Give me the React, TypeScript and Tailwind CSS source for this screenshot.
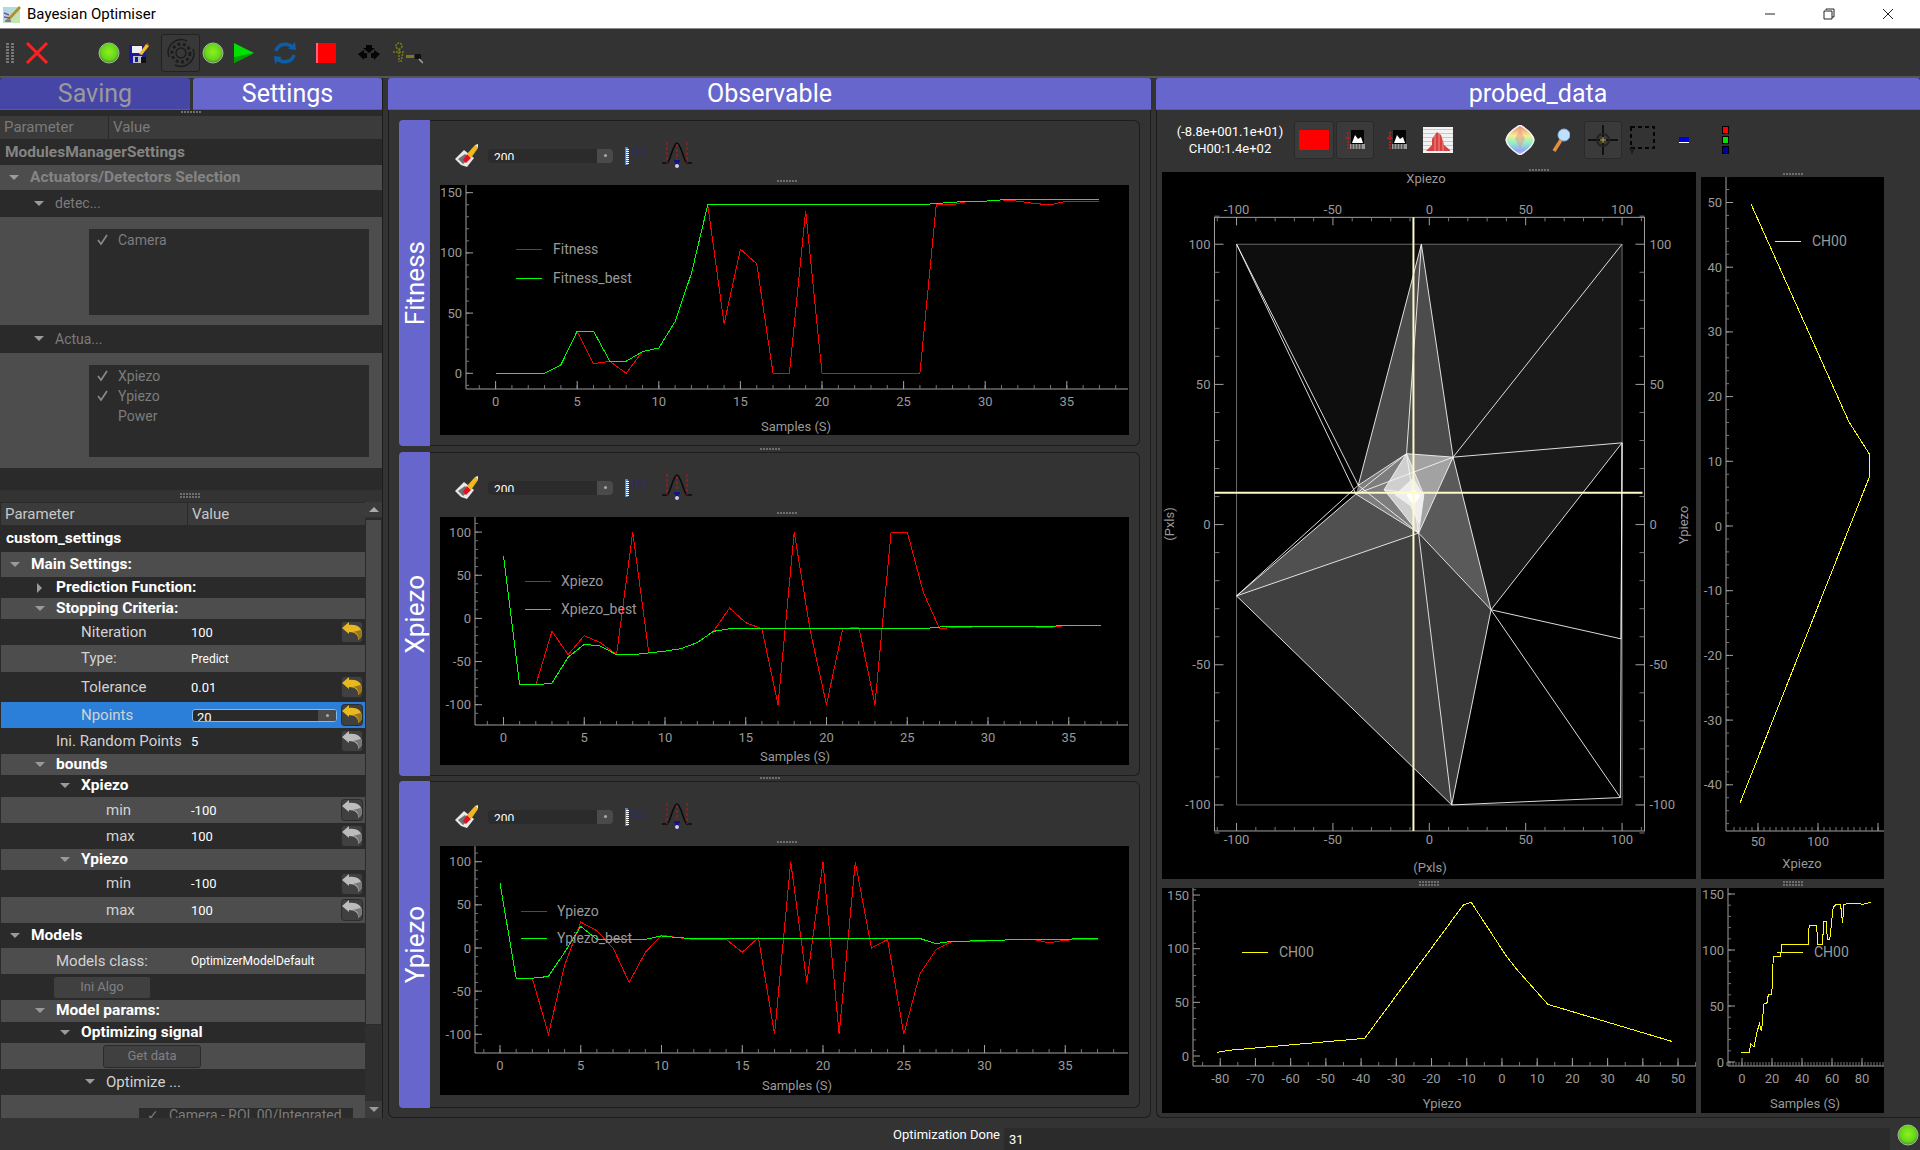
import React from 'react';

const UI_FONT = "font-['Roboto','Noto_Sans',sans-serif]";

const range = (from: number, to: number, step: number) => {
  const out: number[] = [];
  for (let v = from; v <= to + 0.001; v += step) out.push(v);
  return out;
};

// ---------- small icons ----------

function Grip({ rows = 1 }: { rows?: number }) {
  return (
    <svg width="20" height={rows * 3} className="block">
      {range(0, rows - 1, 1).map((r) =>
        range(0, 6, 1).map((c) => <rect key={`${r}-${c}`} x={c * 3} y={r * 3} width="2" height="2" fill="#6e6e6e" />)
      )}
    </svg>
  );
}

function Led({ id }: { id: string }) {
  return (
    <svg width="22" height="22" viewBox="0 0 22 22" className="block">
      <defs>
        <radialGradient id={id} cx="50%" cy="45%" r="55%">
          <stop offset="0%" stopColor="#8cf01e" />
          <stop offset="70%" stopColor="#66d61a" />
          <stop offset="100%" stopColor="#3f9412" />
        </radialGradient>
      </defs>
      <circle cx="11" cy="11" r="10" fill={`url(#${id})`} stroke="#a8b8a0" strokeWidth="1" />
    </svg>
  );
}

function AppIcon() {
  return (
    <svg width="20" height="20" viewBox="0 0 20 20" className="block">
      <defs>
        <linearGradient id="appbg" x1="0" y1="0" x2="1" y2="1">
          <stop offset="0%" stopColor="#a8d8ee" />
          <stop offset="100%" stopColor="#c8e8a0" />
        </linearGradient>
      </defs>
      <rect x="1" y="3" width="17" height="16" fill="url(#appbg)" />
      <path d="M4 16 L17 2 L19 4 L7 17 Z" fill="#b09030" />
      <path d="M2 9 L7 11 M2 13 L8 14 M3 17 L9 17" stroke="#8050a0" strokeWidth="1.5" />
    </svg>
  );
}

function UndoIcon({ color }: { color: 'yellow' | 'gray' }) {
  const main = color === 'yellow' ? '#e8b820' : '#bcbcbc';
  const dark = color === 'yellow' ? '#96761a' : '#767676';
  return (
    <svg width="22" height="22" viewBox="0 0 22 22" className="block">
      <rect x="0.5" y="0.5" width="21" height="21" rx="3" fill="#404040" stroke="#2c2c2c" />
      <path d="M1 7 L8 1 L8 4 C15 3 21 6 21 13 C21 16 19 18 17 19 C18 14 14 11 8 11 L8 13 Z" fill={main} />
      <path d="M12 11 C17 12 18 15 17 19 C19 18 21 16 21 13 C21 11 20.5 10 19.5 9 Z" fill={dark} />
    </svg>
  );
}

function DownArrow() {
  return (
    <svg width="10" height="6" className="block">
      <path d="M0 0 H10 L5 5 Z" fill="#9a9a9a" />
    </svg>
  );
}

function RightArrow() {
  return (
    <svg width="6" height="10" className="block">
      <path d="M0 0 V10 L5 5 Z" fill="#9a9a9a" />
    </svg>
  );
}

function Check() {
  return (
    <svg width="11" height="12" viewBox="0 0 11 12" className="block">
      <path d="M1 6 L4 10 L10 1" stroke="#8a8a8a" strokeWidth="1.6" fill="none" />
    </svg>
  );
}

function CloseCross() {
  return (
    <svg width="24" height="22" viewBox="0 0 24 22" className="block">
      <path d="M2 1 L22 21 M22 1 L2 21" stroke="#ff2020" strokeWidth="3" />
    </svg>
  );
}

function SaveIcon() {
  return (
    <svg width="20" height="20" viewBox="0 0 20 20" className="block">
      <rect x="0" y="2" width="17" height="18" fill="#1a1a9a" />
      <rect x="3" y="3" width="10" height="7" fill="#f0f0f0" />
      <rect x="4" y="13" width="9" height="7" fill="#c0c0c8" />
      <rect x="6" y="14" width="3" height="5" fill="#1a1a9a" />
      <path d="M10 11 L17 1 L20 3 L13 12 Z" fill="#f0c020" />
      <path d="M17 1 L20 3 L19 0 Z" fill="#e04030" />
      <path d="M12 14 H17 V20 H12 Z" fill="#111" />
    </svg>
  );
}

function GearIcon() {
  return (
    <svg width="32" height="32" viewBox="0 0 32 32" className="block" fill="none" stroke="#1c1c1c">
      <circle cx="16" cy="16" r="5" strokeWidth="1.5" />
      <circle cx="16" cy="16" r="9" strokeWidth="3" strokeDasharray="3 2.5" />
      <path d="M4 20 A13 13 0 0 1 22 4 M28 12 A13 13 0 0 1 10 28" strokeWidth="1.5" />
    </svg>
  );
}

function PlayIcon() {
  return (
    <svg width="20" height="20" viewBox="0 0 20 20" className="block">
      <path d="M0 0 L20 10 L0 20 Z" fill="#00e000" />
      <path d="M0 14 L20 10 L0 20 Z" fill="#00a000" />
    </svg>
  );
}

function RefreshIcon() {
  return (
    <svg width="22" height="24" viewBox="0 0 22 24" className="block" fill="none" stroke="#0c5ea8" strokeWidth="3.5">
      <path d="M2 10 C4 3 13 1 18 6" />
      <path d="M20 14 C18 21 9 23 4 18" />
      <path d="M14 8 L22 9 L21 1 Z" fill="#0c5ea8" stroke="none" />
      <path d="M8 16 L0 15 L1 23 Z" fill="#0c5ea8" stroke="none" />
    </svg>
  );
}

function ArrowsIcon() {
  return (
    <svg width="22" height="16" viewBox="0 0 22 16" className="block" fill="#050505">
      <path d="M8 0 H14 V3 H17 L11 8 L5 3 H8 Z" />
      <path d="M0 9 L6 5 V8 H9 V13 H6 V15 Z" />
      <path d="M22 9 L16 5 V8 H13 V13 H16 V15 Z" />
    </svg>
  );
}

function RoiIcon() {
  return (
    <svg width="32" height="22" viewBox="0 0 32 22" className="block" fill="none">
      <circle cx="8" cy="4" r="3" stroke="#7a7a18" strokeWidth="1.5" strokeDasharray="2 1" />
      <path d="M2 10 H12 L10 20 M8 7 V20" stroke="#7a7a18" strokeWidth="1.5" strokeDasharray="2 1" />
      <rect x="15" y="13" width="8" height="3" fill="#7a7a18" />
      <rect x="24" y="12" width="6" height="5" fill="#111" />
      <path d="M28 17 L32 21" stroke="#aaa" strokeWidth="1.5" />
    </svg>
  );
}

function EraserIcon() {
  return (
    <svg width="24" height="24" viewBox="0 0 24 24" className="block">
      <path d="M1 15 L10 6 L20 14 L13 23 L7 21 Z" fill="#e8e8e8" />
      <path d="M4 15 L11 10 L15 15 L9 20 Z" fill="#707070" />
      <path d="M9 16 L13 10 L17 14 L12 19 Z" fill="#e01020" />
      <path d="M13 10 L21 1 L24 4 L17 14 Z" fill="#f0b820" />
      <path d="M21 1 L24 4 L24 0 Z" fill="#f8f0c0" />
    </svg>
  );
}

function RulerIcon() {
  return (
    <svg width="20" height="18" viewBox="0 0 20 18" className="block">
      <rect x="0" y="0" width="3" height="18" fill="#4a80d0" />
      {range(2, 16, 2).map((y) => (
        <rect key={y} x="1" y={y} width="3" height="1" fill="#ffffff" />
      ))}
      <text x="5" y="9" fontSize="10" fill="#2c2c70">123</text>
    </svg>
  );
}

function GaussIcon() {
  return (
    <svg width="30" height="27" viewBox="0 0 30 27" className="block" fill="none">
      <path d="M0 21 H5 C8 21 11 1 15 1 C19 1 22 21 25 21 H30" stroke="#0a0a0a" strokeWidth="1.6" />
      <path d="M5 0 V21 M25 0 V21 M15 2 V18" stroke="#c01818" strokeWidth="1" strokeDasharray="3 2" />
      <rect x="12" y="18" width="6" height="2" fill="#101088" />
      <path d="M15 20 V26" stroke="#101088" strokeWidth="3" />
      <circle cx="15" cy="24" r="2" fill="#d0d0e8" />
    </svg>
  );
}

function SmallPlotIcon({ large }: { large?: boolean }) {
  return (
    <svg width="22" height="22" viewBox="0 0 22 22" className="block">
      <rect x="7" y="1" width="13" height="14" fill="#050505" />
      <path d="M8 14 L11 6 L14 10 L17 8 L19 14 Z" fill="#ffffff" />
      <path d="M4 3 V20 M1 9 H7" stroke="#e01818" strokeWidth={large ? 1.5 : 1} strokeDasharray="2 1" />
      <rect x="6" y="15" width="15" height="5" fill="#9a9a9a" />
      <path d="M8 15 V21 M11 15 V21 M14 15 V21 M17 15 V21" stroke="#333" />
    </svg>
  );
}

function HistIcon() {
  return (
    <svg width="30" height="26" viewBox="0 0 30 26" className="block">
      <rect width="30" height="26" fill="#f2f2f2" />
      {range(2, 24, 4).map((y) => (
        <rect key={y} x="0" y={y} width="30" height="1" fill="#c8c8c8" />
      ))}
      <path d="M3 24 L9 18 V12 L14 5 L18 8 L21 18 L27 23 V24 Z" fill="#d84040" />
      <path d="M12 8 V24 M16 6 V24 M20 14 V24" stroke="#f09090" />
    </svg>
  );
}

function ColorIcon() {
  return (
    <svg width="30" height="30" viewBox="0 0 30 30" className="block">
      <defs>
        <linearGradient id="rainbow" x1="0" y1="0" x2="0" y2="1">
          <stop offset="0%" stopColor="#f07878" />
          <stop offset="35%" stopColor="#f4ee90" />
          <stop offset="60%" stopColor="#90f0c8" />
          <stop offset="85%" stopColor="#90a8f8" />
          <stop offset="100%" stopColor="#e0a0e8" />
        </linearGradient>
      </defs>
      <path d="M15 0 C20 3 28 8 29 15 C28 22 20 27 15 30 C10 27 2 22 1 15 C2 8 10 3 15 0 Z" fill="url(#rainbow)" stroke="#f4f4f4" strokeWidth="1.5" />
      <path d="M15 4 L20 14 L15 24 L10 14 Z" fill="#f08890" opacity="0.45" />
    </svg>
  );
}

function MagnifierIcon() {
  return (
    <svg width="18" height="26" viewBox="0 0 18 26" className="block">
      <circle cx="12" cy="8" r="6" fill="#bfe0ff" stroke="#88b0e0" />
      <path d="M9 13 L2 24" stroke="#e09040" strokeWidth="3.5" />
    </svg>
  );
}

function CrosshairIcon() {
  return (
    <svg width="30" height="30" viewBox="0 0 30 30" className="block" fill="none">
      <path d="M15 0 V30 M0 15 H30" stroke="#050505" strokeWidth="1.5" />
      <circle cx="15" cy="15" r="6" stroke="#222" strokeWidth="2" />
      <path d="M15 12 V18 M12 15 H18" stroke="#d8c040" />
    </svg>
  );
}

function DashedRect() {
  return (
    <svg width="28" height="28" viewBox="0 0 28 28" className="block" fill="none">
      <rect x="2" y="1" width="23" height="21" stroke="#050505" strokeWidth="2" strokeDasharray="4 3" />
      <circle cx="3" cy="23" r="2" stroke="#111" />
      <path d="M3 25 V28" stroke="#111" />
    </svg>
  );
}

function RgbStack() {
  return (
    <div className="flex flex-col gap-[2px]">
      <div className="h-[8px] w-[7px] border border-black bg-[#ff0000]" />
      <div className="h-[8px] w-[7px] border border-black bg-[#00e000]" />
      <div className="h-[8px] w-[7px] border border-black bg-[#0000a0]" />
    </div>
  );
}

// ---------- plots ----------

const TEXT_C = '#999999';
const AXIS_C = '#a0a0a0';

type Tick = [number, string];

type AxesProps = {
  axisX: number;
  axisY: number;
  right: number;
  top?: number;
  xMajor: Tick[];
  xMinor: number[];
  yMajor: Tick[];
  yMinor: number[];
  labelDx?: number;
  labelDy?: number;
  title: { text: string; x: number; y: number };
};

function Axes({ axisX, axisY, right, top = 0, xMajor, xMinor, yMajor, yMinor, labelDx = 4, labelDy = 17, title }: AxesProps) {
  return (
    <g fontSize="13" fill={TEXT_C}>
      <path d={`M${axisX} ${top} V${axisY} H${right}`} stroke={AXIS_C} fill="none" />
      {xMinor.map((x) => (
        <path key={`xm${x}`} d={`M${x} ${axisY} v-4`} stroke="#777" />
      ))}
      {yMinor.map((y) => (
        <path key={`ym${y}`} d={`M${axisX} ${y} h3`} stroke="#777" />
      ))}
      {xMajor.map(([x, t]) => (
        <g key={`x${t}`}>
          <path d={`M${x} ${axisY} v-8`} stroke={AXIS_C} />
          <text x={x} y={axisY + labelDy} textAnchor="middle">{t}</text>
        </g>
      ))}
      {yMajor.map(([y, t]) => (
        <g key={`y${t}`}>
          <path d={`M${axisX} ${y} h7`} stroke={AXIS_C} />
          <text x={axisX - labelDx} y={y + 4.5} textAnchor="end">{t}</text>
        </g>
      ))}
      <text x={title.x} y={title.y + 4} textAnchor="middle">{title.text}</text>
    </g>
  );
}

function Legend({ x, y, color, text, textX }: { x: number; y: number; color: string; text: string; textX: number }) {
  return (
    <g>
      <path d={`M${x} ${y} h26`} stroke={color} shapeRendering="crispEdges" />
      <text x={textX} y={y + 5} fontSize="14" fill={TEXT_C}>{text}</text>
    </g>
  );
}

type TrendProps = {
  h: number;
  axisX: number;
  axisY: number;
  x0: number;
  dx: number;
  y0: number;
  dy: number;
  yTicks: number[];
  yMinorFrom: number;
  yMinorTo: number;
  title: { text: string; x: number; y: number };
  red: number[];
  green: number[];
  legend: { lineX: number; textX: number; y1: number; y2: number; a: string; b: string };
};

function TrendPlot({ h, axisX, axisY, x0, dx, y0, dy, yTicks, yMinorFrom, yMinorTo, title, red, green, legend }: TrendProps) {
  const pts = (d: number[]) => d.map((v, i) => `${x0 + i * dx},${y0 - v * dy}`).join(' ');
  return (
    <div className="mx-[10px] bg-black" style={{ height: h }}>
      <svg width="688" height={h} className="block">
        <Axes
          axisX={axisX}
          axisY={axisY}
          right={688}
          xMajor={range(0, 35, 5).map((v) => [x0 + v * dx, String(v)] as Tick)}
          xMinor={range(-1, 38, 1).map((v) => x0 + v * dx)}
          yMajor={yTicks.map((v) => [y0 - v * dy, String(v)] as Tick)}
          yMinor={range(yMinorFrom, yMinorTo, 10).map((v) => y0 - v * dy)}
          title={title}
        />
        <polyline points={pts(red)} fill="none" stroke="#ff0000" shapeRendering="crispEdges" />
        <polyline points={pts(green)} fill="none" stroke="#00ff00" shapeRendering="crispEdges" />
        <Legend x={legend.lineX} y={legend.y1} color="#ff0000" text={legend.a} textX={legend.textX} />
        <Legend x={legend.lineX} y={legend.y2} color="#00ff00" text={legend.b} textX={legend.textX} />
      </svg>
    </div>
  );
}

const fitnessRed = [0, 0, 0, 0, 7, 35, 8, 10, 0, 18, 21, 43, 83, 140, 41, 103, 91, 0, 0, 135, 0, 0, 0, 0, 0, 0, 0, 140, 140, 143, 143, 144, 143, 141, 140, 143, 143, 143];
const fitnessGreen = [0, 0, 0, 0, 7, 35, 35, 10, 10, 18, 21, 43, 83, 140, 140, 140, 140, 140, 140, 140, 140, 140, 140, 140, 140, 140, 140, 141, 142, 143, 143, 144, 144, 144, 144, 144, 144, 144];
const xRed = [72, -77, -77, -15, -42, -20, -28, -42, 100, -40, -38, -35, -28, -15, 12, -5, -12, -100, 100, -15, -100, -12, -10, -100, 100, 100, 30, -12, -10, -10, -9, -9, -9, -10, -10, -8, -8, -8];
const xGreen = [72, -77, -77, -75, -45, -30, -32, -42, -42, -40, -38, -35, -28, -15, -12, -12, -12, -12, -12, -12, -12, -12, -12, -12, -12, -12, -12, -10, -9, -9, -9, -9, -9, -9, -9, -8, -8, -8];
const yRed = [75, -35, -35, -100, -20, 30, 20, 0, -40, -5, 15, 12, 10, 10, 10, -5, 12, -100, 100, -40, 100, -100, 100, 0, 10, -100, -30, -2, 8, 8, 8, 9, 10, 10, 6, 9, 10, 10];
const yGreen = [75, -35, -35, -33, -5, 25, 10, 10, 10, 10, 14, 12, 11, 11, 11, 11, 11, 11, 11, 11, 11, 11, 11, 11, 11, 11, 11, 5, 8, 8, 9, 9, 10, 10, 10, 10, 11, 11];

function ObsPanel({ name, contentH, children }: { name: string; contentH: string; children: React.ReactNode }) {
  return (
    <div className={`flex ${contentH}`}>
      <div className="flex w-[31px] items-center justify-center rounded-l-[4px] bg-[#6666cc]">
        <span className="rotate-180 text-[26px] leading-none text-white [writing-mode:vertical-rl]">{name}</span>
      </div>
      <div className="flex flex-1 flex-col rounded-r-[6px] border-y border-r border-[#1c1c1c]">
        <div className="relative flex h-[64px] items-center pl-[24px] pt-[5px]">
          <EraserIcon />
          <div className="ml-[10px] flex h-[14px] w-[125px] items-start overflow-hidden rounded-[4px] bg-[#2b2b2b]">
            <div className="ml-[6px] mt-[3px] h-[8px] flex-1 overflow-hidden text-[12px] leading-[12px] text-white">200</div>
            <div className="flex h-full w-[16px] items-center justify-center bg-[#4a4a4a]">
              <div className="h-[3px] w-[3px] rounded-full bg-[#aaa]" />
            </div>
          </div>
          <div className="ml-[12px]"><RulerIcon /></div>
          <div className="ml-[17px]"><GaussIcon /></div>
          <div className="absolute bottom-[2px] left-[347px]"><Grip /></div>
        </div>
        {children}
      </div>
    </div>
  );
}

function MainImagePlot() {
  const m = (vx: number, vy: number): [number, number] => [vx / 2.9 - 2, vy / 2.306 + 28];
  const pg = (p: number[][]) => p.map(([a, b]) => m(a, b).join(',')).join(' ');
  const TL = [222, 102], TR = [1340, 102], C = [758, 102], L = [222, 913], Mb = [846, 1395], N = [960, 945], P = [850, 593];
  const Q = [575, 658], Q2 = [568, 678], R = [715, 585], S = [750, 768], T = [1340, 560], U = [1335, 1378], V = [1337, 1012];
  const fills: [number[][], string][] = [
    [[TL, C, Q], '#0e0e0e'],
    [[C, TR, T, N, P], '#1a1a1a'],
    [[C, P, N, S, R, Q], '#4c4c4c'],
    [[P, N, S, [800, 680]], '#5a5a5a'],
    [[L, Q2, S, Mb], '#404040'],
    [[L, Q2, S], '#505050'],
    [[S, N, Mb], '#3a3a3a'],
    [[Q, R, P, [800, 680], S, Q2], '#7d7d7d'],
    [[R, P, [800, 680], S], '#a2a2a2'],
    [[[650, 668], R, [765, 680], S], '#cfcfcf'],
    [[[680, 680], [735, 640], [765, 682], [752, 750], [725, 705]], '#eeeeee'],
    [[[715, 680], [735, 665], [755, 682], [735, 705]], '#ffffff'],
  ];
  const edges: number[][][] = [
    [TL, Q], [TL, Q2], [C, Q], [C, P], [C, R], [TR, P], [P, T], [T, N], [T, U], [N, P], [N, S], [N, V], [N, U], [N, Mb],
    [L, Q], [L, Q2], [L, S], [L, Mb], [S, Mb], [U, Mb], [Q, R], [Q2, R], [R, P], [P, S], [P, Q2], [R, S], [Q2, S], [Q, S], [V, T],
    [[650, 668], R], [[650, 668], S], [[650, 668], [765, 680]], [R, [765, 680]], [[765, 680], S],
  ];
  const xs = range(-110, 110, 10).map((u) => m(222 + (u + 100) * 5.59, 0)[0]);
  const ys = range(-110, 110, 10).map((u) => m(0, 102 + (100 - u) * 6.465)[1]);
  const [fx0, fy0] = m(158, 40);
  const [fx1, fy1] = m(1405, 1455);
  const labels = [-100, -50, 0, 50, 100];
  const lx = (u: number) => m(222 + (u + 100) * 5.59, 0)[0];
  const ly = (u: number) => m(0, 102 + (100 - u) * 6.465)[1];
  return (
    <svg width="534" height="707" className="block bg-black">
      {fills.map(([p, c], i) => <polygon key={i} points={pg(p)} fill={c} />)}
      <polygon points={pg([TL, TR, [1340, 1395], [222, 1395]])} fill="none" stroke="#6a6a6a" />
      {edges.map(([a, b], i) => (
        <line key={i} x1={m(a[0], a[1])[0]} y1={m(a[0], a[1])[1]} x2={m(b[0], b[1])[0]} y2={m(b[0], b[1])[1]} stroke="#f4f4f4" strokeWidth="0.9" />
      ))}
      <rect x={fx0} y={fy0} width={fx1 - fx0} height={fy1 - fy0} fill="none" stroke={AXIS_C} />
      {xs.map((x, i) => (
        <g key={i} stroke={i % 5 === 1 ? AXIS_C : '#777'}>
          <line x1={x} x2={x} y1={fy0} y2={fy0 + (i % 5 === 1 ? 8 : 4)} />
          <line x1={x} x2={x} y1={fy1} y2={fy1 - (i % 5 === 1 ? 8 : 4)} />
        </g>
      ))}
      {ys.map((y, i) => (
        <g key={i} stroke={i % 5 === 1 ? AXIS_C : '#777'}>
          <line y1={y} y2={y} x1={fx0} x2={fx0 + (i % 5 === 1 ? 9 : 5)} />
          <line y1={y} y2={y} x1={fx1} x2={fx1 - (i % 5 === 1 ? 9 : 5)} />
        </g>
      ))}
      <g fontSize="13" fill={TEXT_C}>
        {labels.map((u) => (
          <g key={u}>
            <text x={lx(u)} y={fy0 - 3} textAnchor="middle">{u}</text>
            <text x={lx(u)} y={fy1 + 13} textAnchor="middle">{u}</text>
            <text x={fx0 - 4} y={ly(u) + 4.5} textAnchor="end">{u}</text>
            <text x={fx1 + 5} y={ly(u) + 4.5}>{u}</text>
          </g>
        ))}
        <text x="264" y="11" textAnchor="middle">Xpiezo</text>
        <text x="268" y="700" textAnchor="middle">(Pxls)</text>
        <text x="12" y="352" textAnchor="middle" transform="rotate(-90 12 352)">(Pxls)</text>
        <text x="526" y="353" textAnchor="middle" transform="rotate(-90 526 353)">Ypiezo</text>
      </g>
      <line x1={fx0} x2={fx1 - 2} y1={m(0, 675)[1]} y2={m(0, 675)[1]} stroke="#fffbc8" strokeWidth="2" />
      <line x1={m(735, 0)[0]} x2={m(735, 0)[0]} y1={fy0} y2={fy1} stroke="#fffbc8" strokeWidth="2" />
    </svg>
  );
}

function SidePlot() {
  const y0 = 349;
  const dy = 6.47;
  const px = (x: number, y: number) => `${x - 1701},${y - 177}`;
  const line = [[1751, 204], [1849, 422], [1870, 455], [1869, 478], [1740, 803]];
  return (
    <svg width="183" height="702" className="block bg-black">
      <Axes
        axisX={25}
        axisY={654}
        right={183}
        xMajor={[[57, '50'], [117, '100'], [177, '']]}
        xMinor={range(33, 180, 6)}
        yMajor={range(-40, 50, 10).map((v) => [y0 - v * dy, String(v)] as Tick)}
        yMinor={range(-46, 54, 2).map((v) => y0 - v * dy)}
        title={{ text: 'Xpiezo', x: 101, y: 687 }}
        labelDy={15}
      />
      <polyline points={line.map(([a, b]) => px(a, b)).join(' ')} fill="none" stroke="#ffff00" shapeRendering="crispEdges" />
      <Legend x={74} y={64} color="#ffff00" text="CH00" textX={111} />
    </svg>
  );
}

function BottomLeftPlot() {
  const c = (vx: number, vy: number) => `${vx / 2.036 - 12},${vy / 3 - 18}`;
  const line = [[137, 547], [160, 541], [437, 505], [638, 105], [654, 97], [725, 257], [745, 295], [810, 403], [1062, 514]];
  const tx = (u: number) => (143 + ((u + 80) / 10) * 71.7) / 2.036 - 12;
  const ty = (u: number) => 168 - u * 1.073;
  return (
    <svg width="534" height="225" className="block bg-black">
      <Axes
        axisX={31}
        axisY={178}
        right={534}
        top={0}
        xMajor={range(-80, 50, 10).map((u) => [tx(u), String(u)] as Tick)}
        xMinor={range(-85, 55, 5).map(tx)}
        yMajor={[0, 50, 100, 150].map((u) => [ty(u), String(u)] as Tick)}
        yMinor={range(-5, 155, 10).map(ty)}
        title={{ text: 'Ypiezo', x: 280, y: 216 }}
        labelDy={17}
      />
      <polyline points={line.map(([a, b]) => c(a, b)).join(' ')} fill="none" stroke="#ffff00" shapeRendering="crispEdges" />
      <Legend x={80} y={64} color="#ffff00" text="CH00" textX={117} />
    </svg>
  );
}

function BottomRightPlot() {
  const c = (vx: number, vy: number) => `${vx / 2.036 + 1150 - 1701},${vy / 3 - 18}`;
  const line = [[1203, 547], [1220, 547], [1223, 522], [1230, 530], [1236, 484], [1241, 462], [1245, 484], [1250, 402], [1256, 400], [1259, 373], [1266, 373], [1269, 260], [1284, 260], [1286, 223], [1340, 223], [1342, 166], [1357, 166], [1360, 223], [1369, 223], [1372, 153], [1377, 153], [1379, 208], [1384, 208], [1391, 112], [1397, 103], [1406, 103], [1410, 158], [1413, 103], [1424, 100], [1440, 100], [1452, 103], [1467, 97]];
  const tx = (u: number) => 41 + (u * 30) / 20;
  const ty = (u: number) => 174 - u * 1.12;
  return (
    <svg width="183" height="225" className="block bg-black">
      <Axes
        axisX={27}
        axisY={178}
        right={183}
        xMajor={range(0, 80, 20).map((u) => [tx(u), String(u)] as Tick)}
        xMinor={range(-10, 94, 2).map(tx)}
        yMajor={[0, 50, 100, 150].map((u) => [ty(u), String(u)] as Tick)}
        yMinor={range(0, 155, 10).map(ty)}
        title={{ text: 'Samples (S)', x: 104, y: 216 }}
      />
      <polyline points={line.map(([a, b]) => c(a, b)).join(' ')} fill="none" stroke="#ffff00" shapeRendering="crispEdges" />
      <Legend x={76} y={64} color="#ffff00" text="CH00" textX={113} />
    </svg>
  );
}

// ---------- settings tree ----------

type Row = {
  h: string;
  x: string;
  label: string;
  arrow?: 'down' | 'right';
  arrowX?: string;
  bold?: boolean;
  value?: string;
  small?: boolean;
  reset?: 'yellow' | 'gray';
  selected?: boolean;
  button?: string;
};

const rows: Row[] = [
  { h: 'h-[26px]', x: 'pl-[5px]', label: 'custom_settings', bold: true },
  { h: 'h-[25px]', x: 'pl-[30px]', label: 'Main Settings:', bold: true, arrow: 'down', arrowX: 'left-[9px]' },
  { h: 'h-[21px]', x: 'pl-[55px]', label: 'Prediction Function:', bold: true, arrow: 'right', arrowX: 'left-[36px]' },
  { h: 'h-[21px]', x: 'pl-[55px]', label: 'Stopping Criteria:', bold: true, arrow: 'down', arrowX: 'left-[34px]' },
  { h: 'h-[26px]', x: 'pl-[80px]', label: 'Niteration', value: '100', reset: 'yellow' },
  { h: 'h-[27px]', x: 'pl-[80px]', label: 'Type:', value: 'Predict', small: true },
  { h: 'h-[30px]', x: 'pl-[80px]', label: 'Tolerance', value: '0.01', reset: 'yellow' },
  { h: 'h-[26px]', x: 'pl-[80px]', label: 'Npoints', reset: 'yellow', selected: true },
  { h: 'h-[26px]', x: 'pl-[55px]', label: 'Ini. Random Points', value: '5', reset: 'gray' },
  { h: 'h-[21px]', x: 'pl-[55px]', label: 'bounds', bold: true, arrow: 'down', arrowX: 'left-[34px]' },
  { h: 'h-[22px]', x: 'pl-[80px]', label: 'Xpiezo', bold: true, arrow: 'down', arrowX: 'left-[59px]' },
  { h: 'h-[26px]', x: 'pl-[105px]', label: 'min', value: '-100', reset: 'gray' },
  { h: 'h-[26px]', x: 'pl-[105px]', label: 'max', value: '100', reset: 'gray' },
  { h: 'h-[21px]', x: 'pl-[80px]', label: 'Ypiezo', bold: true, arrow: 'down', arrowX: 'left-[59px]' },
  { h: 'h-[27px]', x: 'pl-[105px]', label: 'min', value: '-100', reset: 'gray' },
  { h: 'h-[26px]', x: 'pl-[105px]', label: 'max', value: '100', reset: 'gray' },
  { h: 'h-[25px]', x: 'pl-[30px]', label: 'Models', bold: true, arrow: 'down', arrowX: 'left-[9px]' },
  { h: 'h-[26px]', x: 'pl-[55px]', label: 'Models class:', value: 'OptimizerModelDefault', small: true },
  { h: 'h-[26px]', x: 'pl-[52px]', label: '', button: 'Ini Algo' },
  { h: 'h-[22px]', x: 'pl-[55px]', label: 'Model params:', bold: true, arrow: 'down', arrowX: 'left-[34px]' },
  { h: 'h-[21px]', x: 'pl-[80px]', label: 'Optimizing signal', bold: true, arrow: 'down', arrowX: 'left-[59px]' },
  { h: 'h-[26px]', x: 'pl-[102px]', label: '', button: 'Get data' },
  { h: 'h-[26px]', x: 'pl-[105px]', label: 'Optimize ...', arrow: 'down', arrowX: 'left-[84px]' },
];

function TreeRow({ row, index }: { row: Row; index: number }) {
  const bg = row.selected ? 'bg-[#2b7fd9]' : index % 2 === 1 ? 'bg-[#4d4d4d]' : 'bg-[#2a2a2a]';
  return (
    <div className={`relative flex items-center ${row.h} ${bg}`}>
      {row.arrow && (
        <div className={`absolute top-1/2 -translate-y-1/2 ${row.arrowX}`}>
          {row.arrow === 'down' ? <DownArrow /> : <RightArrow />}
        </div>
      )}
      <div className={`w-[188px] shrink-0 whitespace-nowrap ${row.x} ${row.bold ? 'text-[15.5px] font-bold text-white' : 'text-[15px] text-[#d2d2d2]'}`}>
        {row.button ? (
          <div className="flex h-[23px] w-[98px] items-center justify-center rounded-[3px] border border-[#2a2a2a] bg-[#404040] text-[13px] font-normal text-[#808080]">
            {row.button}
          </div>
        ) : (
          row.label
        )}
      </div>
      {row.value && <div className={`ml-[2px] leading-none text-white ${row.small ? 'text-[12px]' : 'text-[13px]'}`}>{row.value}</div>}
      {row.selected && (
        <div className="ml-[3px] flex h-[13px] w-[145px] overflow-hidden rounded-[3px] border border-[#86b6ee] bg-[#2a2a2a]">
          <div className="ml-[4px] mt-[2px] h-[9px] flex-1 overflow-hidden text-[13px] leading-[12px] text-white">20</div>
          <div className="flex w-[18px] items-center justify-center bg-[#4a4a4a]">
            <div className="h-[3px] w-[3px] rounded-full bg-[#aaa]" />
          </div>
        </div>
      )}
      {row.reset && (
        <div className="absolute right-[2px] top-1/2 -translate-y-1/2">
          <UndoIcon color={row.reset} />
        </div>
      )}
    </div>
  );
}

function HeaderRow({ first, muted, h }: { first: string; muted?: boolean; h: string }) {
  const color = muted ? 'text-[#7a7a7a]' : 'text-[#c8c8c8]';
  return (
    <div className={`flex items-center border-y border-[#2a2a2a] bg-[#3b3b3b] text-[15px] ${h} ${color}`}>
      <div className={`${first} flex h-full items-center border-r border-[#2a2a2a] pl-[4px]`}>Parameter</div>
      <div className="flex-1 pl-[4px]">Value</div>
    </div>
  );
}

function PlainRow({ h, bg, className, children }: { h: string; bg: string; className?: string; children: React.ReactNode }) {
  return <div className={`relative flex items-center ${h} ${bg} ${className ?? ''}`}>{children}</div>;
}

function DetectorList({ items, h }: { items: [string, boolean][]; h: string }) {
  return (
    <div className={`ml-[89px] w-[280px] bg-[#2b2b2b] pt-[1px] ${h}`}>
      {items.map(([name, on]) => (
        <div key={name} className="flex h-[20px] items-center text-[14px] text-[#7c7c7c]">
          <div className="ml-[8px] w-[21px]">{on && <Check />}</div>
          {name}
        </div>
      ))}
    </div>
  );
}

function TopTree() {
  return (
    <div className="h-[375px] bg-[#2a2a2a] text-[14px] text-[#7c7c7c]">
      <HeaderRow first="w-[109px]" muted h="h-[25px]" />
      <PlainRow h="h-[25px]" bg="bg-[#2a2a2a]" className="pl-[5px] text-[15.5px] font-bold text-[#848484]">ModulesManagerSettings</PlainRow>
      <PlainRow h="h-[25px]" bg="bg-[#4d4d4d]" className="pl-[30px] text-[15.5px] font-bold text-[#848484]">
        <div className="absolute left-[9px]"><DownArrow /></div>
        Actuators/Detectors Selection
      </PlainRow>
      <PlainRow h="h-[27px]" bg="bg-[#2a2a2a]" className="pl-[55px]">
        <div className="absolute left-[34px]"><DownArrow /></div>
        detec...
      </PlainRow>
      <div className="flex h-[108px] items-start bg-[#4d4d4d] pt-[12px]">
        <DetectorList items={[['Camera', true]]} h="h-[86px]" />
      </div>
      <PlainRow h="h-[28px]" bg="bg-[#2a2a2a]" className="pl-[55px]">
        <div className="absolute left-[34px]"><DownArrow /></div>
        Actua...
      </PlainRow>
      <div className="flex h-[115px] items-start bg-[#4d4d4d] pt-[12px]">
        <DetectorList items={[['Xpiezo', true], ['Ypiezo', true], ['Power', false]]} h="h-[92px]" />
      </div>
    </div>
  );
}

function SettingsTree() {
  return (
    <div className="flex h-[616px] overflow-hidden">
      <div className="w-[365px] shrink-0 overflow-hidden border-l border-[#2a2a2a]">
        <HeaderRow first="w-[187px]" h="h-[24px]" />
        {rows.map((r, i) => <TreeRow key={i} row={r} index={i} />)}
        <div className="h-[23px] bg-[#4d4d4d] pl-[138px] pt-[13px]">
          <div className="flex h-[10px] w-[214px] items-start overflow-hidden bg-[#2b2b2b] pl-[8px] text-[14px] leading-none text-[#7c7c7c]">
            <span className="mr-[10px]">✓</span>
            <span className="whitespace-nowrap">Camera - ROI_00/Integrated</span>
          </div>
        </div>
      </div>
      <div className="flex w-[17px] flex-col bg-[#2f2f2f]">
        <div className="flex h-[15px] items-center justify-center bg-[#3b3b3b]">
          <svg width="10" height="6"><path d="M0 5 H10 L5 0 Z" fill="#aaa" /></svg>
        </div>
        <div className="mt-[2px] h-[506px] border border-[#2a2a2a] bg-[#4a4a4a]" />
        <div className="flex-1" />
        <div className="flex h-[17px] items-center justify-center bg-[#3b3b3b]">
          <DownArrow />
        </div>
      </div>
    </div>
  );
}

function TabHead({ text, className }: { text: string; className: string }) {
  return (
    <div className={`flex h-[32px] items-center justify-center rounded-t-[3px] border-b border-[#5555bb] text-[25px] leading-none ${className}`}>
      {text}
    </div>
  );
}

function ToolBtn({ children, className }: { children: React.ReactNode; className?: string }) {
  return (
    <div className={`flex h-[38px] w-[38px] items-center justify-center rounded-[3px] border border-[#2a2a2a] bg-[#3a3a3a] ${className ?? ''}`}>
      {children}
    </div>
  );
}

export default function App() {
  return (
    <div className={`flex h-[1150px] w-[1920px] flex-col overflow-hidden bg-[#333333] ${UI_FONT}`}>
      {/* title bar */}
      <div className="flex h-[29px] items-center border-b border-[#8c8c8c] bg-white pl-[2px] text-[15px] text-black">
        <AppIcon />
        <span className="ml-[5px]">Bayesian Optimiser</span>
        <div className="ml-auto flex items-center">
          <svg width="12" height="12" className="mr-[47px]"><path d="M1 6 H11" stroke="#222" /></svg>
          <svg width="12" height="12" className="mr-[47px]"><path d="M3 2 V1 H11 V9 H9 M1 3 H9 V11 H1 Z" stroke="#222" fill="none" /></svg>
          <svg width="12" height="12" className="mr-[26px]"><path d="M1 1 L11 11 M11 1 L1 11" stroke="#222" /></svg>
        </div>
      </div>

      {/* main toolbar */}
      <div className="flex h-[49px] items-center border-b-2 border-[#555] pl-[6px]">
        <div className="grid grid-cols-2 gap-x-[2px] gap-y-[1px]">
          {range(1, 14, 1).map((i) => <div key={i} className="h-[2px] w-[3px] bg-[#777]" />)}
        </div>
        <div className="ml-[11px]"><CloseCross /></div>
        <div className="ml-[49px]"><Led id="led-a" /></div>
        <div className="ml-[9px]"><SaveIcon /></div>
        <div className="ml-[12px] flex h-[38px] w-[39px] items-center justify-center rounded-[3px] border border-[#222] bg-[#383838]"><GearIcon /></div>
        <div className="ml-[2px]"><Led id="led-b" /></div>
        <div className="ml-[10px]"><PlayIcon /></div>
        <div className="ml-[20px]"><RefreshIcon /></div>
        <div className="ml-[20px] h-[20px] w-[20px] border-l-2 border-[#ff6080] bg-[#ff0000]" />
        <div className="ml-[22px]"><ArrowsIcon /></div>
        <div className="ml-[11px]"><RoiIcon /></div>
      </div>

      <div className="flex h-[1040px]">
        {/* settings column */}
        <div className="flex w-[383px] flex-col border-r border-[#1c1c1c]">
          <div className="flex gap-[3px]">
            <TabHead text="Saving" className="w-[190px] bg-[#4646a6] text-[#9a9a9a]" />
            <TabHead text="Settings" className="w-[189px] bg-[#6666cc] text-white" />
          </div>
          <div className="flex h-[5px] items-center justify-center bg-[#2a2a2a]"><Grip /></div>
          <TopTree />
          <div className="flex h-[12px] items-center justify-center bg-[#333] pr-[2px]"><Grip rows={2} /></div>
          <SettingsTree />
        </div>

        {/* observable column */}
        <div className="ml-[5px] flex w-[763px] flex-col">
          <TabHead text="Observable" className="bg-[#6666cc] text-white" />
          <div className="flex h-[1008px] flex-col rounded-b-[6px] border-x border-b border-[#1c1c1c] px-[10px] pt-[10px]">
            <ObsPanel name="Fitness" contentH="h-[326px]">
              <TrendPlot
                h={250}
                axisX={26}
                axisY={204}
                x0={55.6}
                dx={16.32}
                y0={188.3}
                dy={1.204}
                yTicks={[0, 50, 100, 150]}
                yMinorFrom={-10}
                yMinorTo={150}
                title={{ text: 'Samples (S)', x: 356, y: 242 }}
                red={fitnessRed}
                green={fitnessGreen}
                legend={{ lineX: 76, textX: 113, y1: 64, y2: 93, a: 'Fitness', b: 'Fitness_best' }}
              />
            </ObsPanel>
            <div className="flex h-[6px] items-center justify-center"><Grip /></div>
            <ObsPanel name="Xpiezo" contentH="h-[324px]">
              <TrendPlot
                h={248}
                axisX={35}
                axisY={208}
                x0={63.5}
                dx={16.15}
                y0={101.4}
                dy={0.863}
                yTicks={[-100, -50, 0, 50, 100]}
                yMinorFrom={-110}
                yMinorTo={110}
                title={{ text: 'Samples (S)', x: 355, y: 240 }}
                red={xRed}
                green={xGreen}
                legend={{ lineX: 85, textX: 121, y1: 64, y2: 92, a: 'Xpiezo', b: 'Xpiezo_best' }}
              />
            </ObsPanel>
            <div className="flex h-[5px] items-center justify-center"><Grip /></div>
            <ObsPanel name="Ypiezo" contentH="h-[327px]">
              <TrendPlot
                h={249}
                axisX={35}
                axisY={207}
                x0={60}
                dx={16.15}
                y0={102}
                dy={0.863}
                yTicks={[-100, -50, 0, 50, 100]}
                yMinorFrom={-110}
                yMinorTo={110}
                title={{ text: 'Samples (S)', x: 357, y: 240 }}
                red={yRed}
                green={yGreen}
                legend={{ lineX: 81, textX: 117, y1: 65, y2: 92, a: 'Ypiezo', b: 'Ypiezo_best' }}
              />
            </ObsPanel>
          </div>
        </div>

        {/* probed data column */}
        <div className="ml-[5px] flex w-[764px] flex-col">
          <TabHead text="probed_data" className="bg-[#6666cc] text-white" />
          <div className="h-[1008px] rounded-bl-[6px] border-b border-l border-[#1c1c1c]">
            <div className="flex h-[58px] items-center pl-[19px] pt-[2px]">
              <div className="w-[108px] text-center text-[13px] leading-[17px] text-white">
                <div>(-8.8e+001.1e+01)</div>
                <div>CH00:1.4e+02</div>
              </div>
              <ToolBtn className="ml-[10px] w-[40px]"><div className="h-[20px] w-[30px] bg-[#ff0000]" /></ToolBtn>
              <ToolBtn className="ml-[2px]"><SmallPlotIcon /></ToolBtn>
              <div className="ml-[12px]"><SmallPlotIcon large /></div>
              <div className="ml-[15px]"><HistIcon /></div>
              <div className="ml-[52px]"><ColorIcon /></div>
              <div className="ml-[17px]"><MagnifierIcon /></div>
              <ToolBtn className="ml-[14px]"><CrosshairIcon /></ToolBtn>
              <div className="ml-[7px]"><DashedRect /></div>
              <div className="ml-[22px] h-[6px] w-[10px] border-b border-white bg-[#0000e0]" />
              <div className="ml-[33px]"><RgbStack /></div>
            </div>
            <div className="flex h-[4px] items-center justify-center"><Grip /></div>
            <div className="flex pl-[5px]">
              <MainImagePlot />
              <div className="ml-[5px]">
                <div className="flex h-[5px] items-center justify-center"><Grip /></div>
                <SidePlot />
              </div>
            </div>
            <div className="flex h-[9px] pl-[5px]">
              <div className="flex w-[534px] items-center justify-center"><Grip rows={2} /></div>
              <div className="ml-[5px] flex w-[183px] items-center justify-center"><Grip rows={2} /></div>
            </div>
            <div className="flex pl-[5px]">
              <BottomLeftPlot />
              <div className="ml-[5px]"><BottomRightPlot /></div>
            </div>
          </div>
        </div>
      </div>

      {/* status bar */}
      <div className="flex h-[32px] items-end">
        <div className="mb-[5px] ml-[893px] w-[103px] whitespace-nowrap text-[13px] leading-[20px] text-white">Optimization Done</div>
        <div className="ml-[8px] flex h-[22px] w-[886px] items-end bg-[#2b2b2b] pb-[2px] pl-[5px] text-[13px] leading-[17px] text-white">31</div>
        <div className="mb-[4px] ml-[7px]"><Led id="led-c" /></div>
      </div>
    </div>
  );
}
